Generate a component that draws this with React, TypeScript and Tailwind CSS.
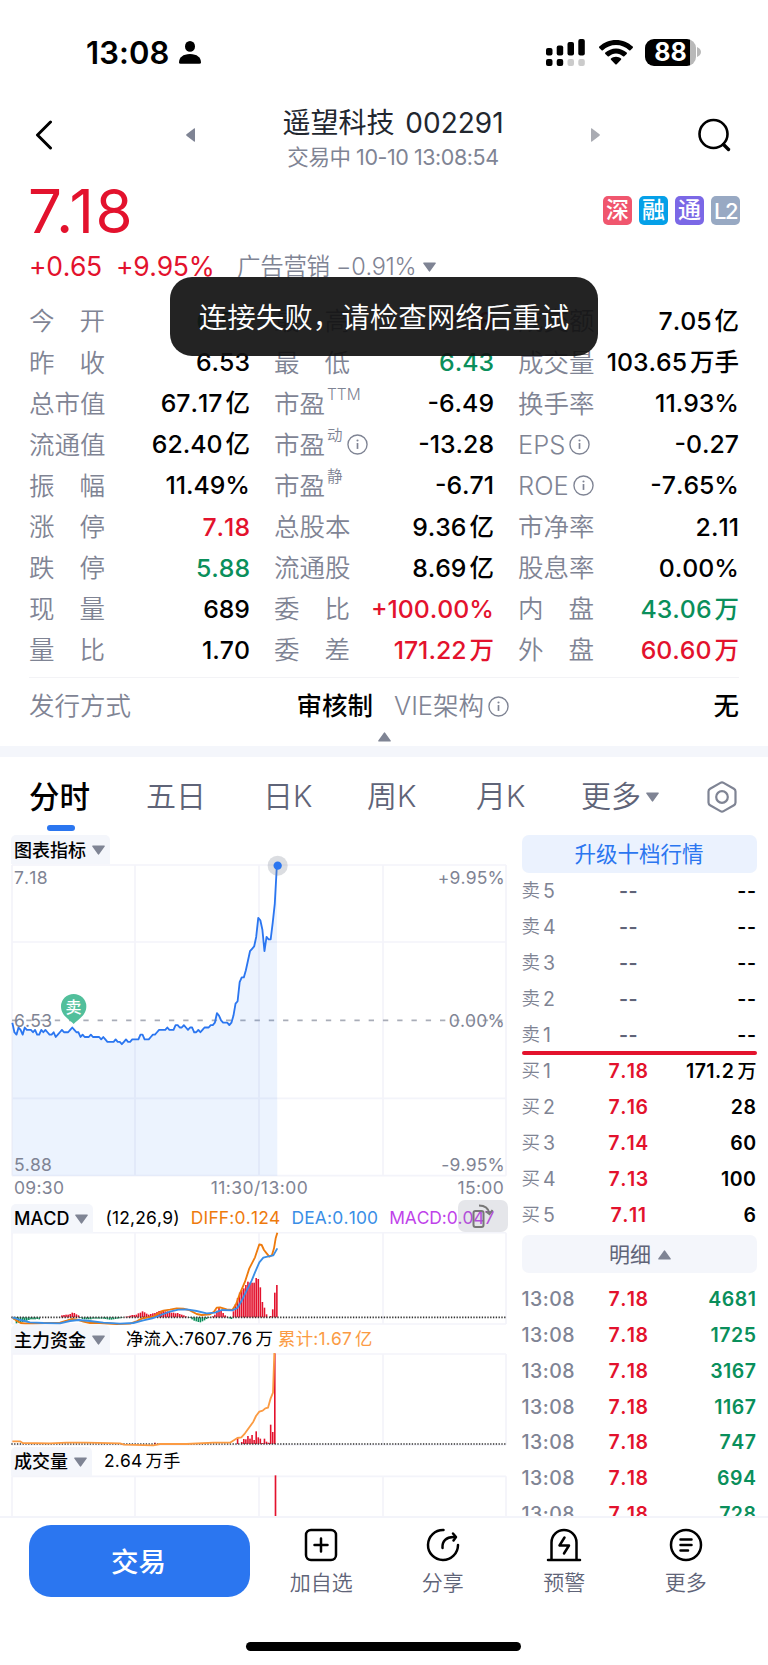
import { type ReactNode } from 'react'

type Tone = 'up' | 'down' | 'flat'

const TONE: Record<Tone, string> = {
  up: 'text-[#e3122d]',
  down: 'text-[#0a8f5b]',
  flat: 'text-black',
}

interface Quote {
  label: string
  sup?: string
  info?: boolean
  value: string
  unit?: string
  tone?: Tone
}

const QUOTES: Quote[] = [
  { label: '今开', value: '6.52', tone: 'down' },
  { label: '最高', value: '7.18', tone: 'up' },
  { label: '成交额', value: '7.05', unit: '亿' },
  { label: '昨收', value: '6.53' },
  { label: '最低', value: '6.43', tone: 'down' },
  { label: '成交量', value: '103.65', unit: '万手' },
  { label: '总市值', value: '67.17', unit: '亿' },
  { label: '市盈', sup: 'TTM', value: '-6.49' },
  { label: '换手率', value: '11.93%' },
  { label: '流通值', value: '62.40', unit: '亿' },
  { label: '市盈', sup: '动', info: true, value: '-13.28' },
  { label: 'EPS', info: true, value: '-0.27' },
  { label: '振幅', value: '11.49%' },
  { label: '市盈', sup: '静', value: '-6.71' },
  { label: 'ROE', info: true, value: '-7.65%' },
  { label: '涨停', value: '7.18', tone: 'up' },
  { label: '总股本', value: '9.36', unit: '亿' },
  { label: '市净率', value: '2.11' },
  { label: '跌停', value: '5.88', tone: 'down' },
  { label: '流通股', value: '8.69', unit: '亿' },
  { label: '股息率', value: '0.00%' },
  { label: '现量', value: '689' },
  { label: '委比', value: '+100.00%', tone: 'up' },
  { label: '内盘', value: '43.06', unit: '万', tone: 'down' },
  { label: '量比', value: '1.70' },
  { label: '委差', value: '171.22', unit: '万', tone: 'up' },
  { label: '外盘', value: '60.60', unit: '万', tone: 'up' },
]

const SELLS = ['5', '4', '3', '2', '1']
const BUYS = [
  { level: '1', price: '7.18', volume: '171.2', unit: '万' },
  { level: '2', price: '7.16', volume: '28' },
  { level: '3', price: '7.14', volume: '60' },
  { level: '4', price: '7.13', volume: '100' },
  { level: '5', price: '7.11', volume: '6' },
]
const TRADES = ['4681', '1725', '3167', '1167', '747', '694', '728']

/* ─── Chart data ─────────────────────────────────────────────────────────────
 * One entry per minute from 09:30. Charts use three units per CSS pixel, with
 * the first minute at x = 37 and MINUTE units between minutes.
 * ──────────────────────────────────────────────────────────────────────────── */
const MINUTE = 6.2
const minuteX = (i: number) => 37 + i * MINUTE

// Price minus previous close, in cents
const PRICES = [
  -1, -5, -6, -3, -4, -6, -3, -4, -4, -4, -5, -4, -6, -6, -4, -5, -4, -5, -6, -6, -5, -7, -6, -5, -4, -5,
  -5, -5, -4, -3, -4, -5, -5, -7, -6, -7, -7, -7, -6, -7, -7, -7, -7, -8, -7, -8, -9, -9, -9, -9, -8, -9,
  -9, -10, -9, -8, -9, -9, -8, -8, -8, -8, -6, -6, -8, -8, -8, -7, -6, -6, -5, -4, -4, -4, -4, -3, -4, -4,
  -4, -2, -2, -3, -3, -2, -3, -4, -3, -3, -5, -5, -4, -5, -4, -3, -3, -3, -2, -2, -1, 3, 2, 0, -1, -1, -1,
  -2, -1, 2, 7, 8, 16, 18, 18, 21, 25, 29, 30, 31, 35, 43, 42, 38, 29, 35, 34, 34, 41, 49, 65,
]
const PRICE_LINE = PRICES.map((p, i) => `${minuteX(i).toFixed(1)},${(511 - p * 7.15).toFixed(1)}`).join(' ')

const MACD_BARS = [
  0, -8, -18, -16, -16, -14, -12, -10, -8, -6, -6, -6, -5, -6, 0, 0, 0, 0, 0, 0, 0, 0, 0, 0, 6, 7, 8, 8, 10,
  14, 13, 9, 6, -2, -5, -6, -6, -6, -6, -4, -4, -4, -4, -4, -4, -5, -6, -7, -7, -6, -5, -4, -3, -2, 0, 2, 3,
  5, 7, 7, 8, 12, 14, 18, 15, 11, 8, 10, 12, 13, 16, 19, 20, 19, 18, 18, 16, 14, 14, 12, 13, 10, 8, 6, 3, 0,
  -2, -6, -10, -12, -14, -15, -12, -9, -5, -2, 0, 3, 8, 20, 28, 20, 13, 6, 2, -3, -5, 18, 40, 58, 74, 82, 87,
  97, 107, 104, 104, 104, 118, 115, 90, 46, 29, 9, 0, 4, 24, 74, 97,
]

const FUND_BARS = [
  [69, 4], [109, 18], [111, 6], [112, 15], [113, 14], [114, 24], [115, 16], [116, 27], [117, 12], [118, 38],
  [119, 20], [120, 16], [121, 3], [122, 16], [123, 7], [124, 4], [125, 58], [126, 36], [127, 272],
]

const DIFF_LINE =
  '37,382 50,392 62,399 75,400 100,400 140,399 180,398 200,392 215,387 232,389 250,395 270,399 300,399 350,402 390,401 410,394 425,386 440,383 460,380 475,370 490,362 510,359 530,355 550,356 570,361 590,372 605,375 630,373 642,365 650,353 660,352 680,358 697,360 708,343 720,310 735,275 748,235 765,202 778,163 785,165 792,180 800,190 808,200 816,195 822,175 827,145 832,128'
const DEA_LINE =
  '37,382 60,390 90,397 130,399 180,400 210,393 235,390 270,393 310,398 360,401 400,399 430,391 460,384 490,372 510,365 535,359 560,358 590,363 620,370 645,368 665,360 697,361 712,354 725,332 740,302 755,272 765,247 778,217 790,203 805,199 820,196 832,175'
const FUND_LINE =
  '37,754 60,754 68,759 150,760 200,758 260,758 360,760 372,764 460,766 480,762 560,762 640,758 690,758 712,744 724,742 735,730 748,712 760,695 768,678 778,665 788,662 796,655 804,653 812,625 819,608 823,489'

function Caret({ up, className = '' }: { up?: boolean; className?: string }) {
  return (
    <svg viewBox="0 0 13 10" className={`h-[10px] w-[13px] shrink-0 fill-[#7f8494] ${className}`}>
      <path d={up ? 'M5.7 .9a1 1 0 0 1 1.6 0L12.7 8.4a.7.7 0 0 1-.6 1.1H.9a.7.7 0 0 1-.6-1.1Z' : 'M5.7 9.1a1 1 0 0 0 1.6 0L12.7 1.6A.7.7 0 0 0 12.1 .5H.9a.7.7 0 0 0-.6 1.1Z'} />
    </svg>
  )
}

function InfoIcon() {
  return (
    <svg viewBox="0 0 20 20" className="ml-[4px] h-[21px] w-[21px] shrink-0" fill="none" stroke="#7f8494" strokeWidth="1.3">
      <circle cx="10" cy="10" r="9.1" />
      <path d="M10 8.6v5.6" strokeWidth="1.6" />
      <circle cx="10" cy="6.2" r="1" fill="#7f8494" stroke="none" />
    </svg>
  )
}

function StatusBar() {
  return (
    <div className="flex h-[95px] shrink-0 items-center justify-between pt-[9px] pr-[67px] pl-[86px]">
      <div className="flex items-center">
        <span className="text-[31px] leading-none font-semibold tracking-[0.1px]">13:08</span>
        <svg viewBox="0 0 22 23" className="ml-[9px] h-[23px] w-[22px]">
          <ellipse cx="11" cy="5.4" rx="5" ry="5.4" />
          <path d="M0 21.5C0 16.5 4 13 11 13s11 3.5 11 8.5c0 .8-.6 1.2-1.4 1.2H1.4C.6 22.7 0 22.3 0 21.5Z" />
        </svg>
      </div>
      <div className="flex items-center">
        <svg viewBox="0 0 39 27" className="h-[27px] w-[39px]">
          <rect x="0" y="9" width="6.5" height="7.5" rx="2" />
          <rect x="10.7" y="6.5" width="6.5" height="10" rx="2" />
          <rect x="21.5" y="3" width="6.5" height="13.5" rx="2" />
          <rect x="32.3" y="0" width="6.5" height="16.5" rx="2" />
          <rect x="0" y="20" width="6.5" height="7" rx="2" />
          <rect x="10.7" y="20" width="6.5" height="7" rx="2" />
          <rect x="21.5" y="20" width="6.5" height="7" rx="2" fill="#cbcbcb" />
          <rect x="32.3" y="20" width="6.5" height="7" rx="2" fill="#cbcbcb" />
        </svg>
        <svg viewBox="0 0 34 25" className="ml-[14px] h-[25px] w-[34px]">
          <path d="M17 0C23.500 0 29.400 2.500 33.700 6.600c.4.400.4.900 0 1.300l-2.300 2.300c-.4.400-.9.300-1.300 0C26.700 7 22.100 5 17 5S7.300 7 3.900 10.200c-.4.300-.9.400-1.300 0L.3 7.900c-.4-.4-.4-.9 0-1.300C4.600 2.500 10.500 0 17 0Z" />
          <path d="M17 8.400c4.100 0 7.900 1.600 10.700 4.200.4.400.4.900 0 1.300l-2.400 2.400c-.4.400-.9.300-1.300 0-1.900-1.700-4.300-2.800-7-2.800s-5.100 1.100-7 2.800c-.4.300-.9.400-1.300 0l-2.400-2.400c-.4-.4-.4-.9 0-1.300C9.100 10 12.900 8.400 17 8.400Z" />
          <path d="M17 16.700c2 0 3.700.7 5 1.900.4.400.4.800 0 1.200l-4.300 4.400c-.4.400-1 .4-1.400 0L12 19.800c-.4-.4-.4-.8 0-1.200 1.300-1.200 3-1.900 5-1.900Z" />
        </svg>
        <div className="ml-[12px] flex h-[27px] w-[51px] items-center justify-center rounded-[9px] bg-[linear-gradient(90deg,#000_0_89%,#b9b9b9_89%)]">
          <span className="text-[25px] leading-none font-bold text-white">88</span>
        </div>
        <svg viewBox="0 0 4 10" className="ml-[1px] h-[10px] w-[4px]" fill="#b9b9b9">
          <path d="M0 0c2.500 1 4 2.700 4 5s-1.500 4-4 5Z" />
        </svg>
      </div>
    </div>
  )
}

function Header() {
  return (
    <div className="flex h-[80px] shrink-0 items-center justify-between pr-[37px] pl-[35px]">
      <div className="flex items-center">
        <svg viewBox="0 0 18 30" className="h-[30px] w-[18px]" fill="none" stroke="#000" strokeWidth="3" strokeLinecap="round" strokeLinejoin="round">
          <path d="M15.500 2 2.500 15l13 13" />
        </svg>
        <svg viewBox="0 0 9 14" className="ml-[133px] h-[14px] w-[9px] fill-[#7f8494]">
          <path d="M9 .8v12.400a.6.6 0 0 1-1 .4L.5 7.700a1 1 0 0 1 0-1.400L8 .4a.6.6 0 0 1 1 .4Z" />
        </svg>
      </div>
      <div className="pt-[9px] text-center whitespace-nowrap">
        <div className="h-[34px] text-[28px] leading-[34px] text-[#22272f] [word-spacing:3px]">遥望科技 002291</div>
        <div className="h-[34px] text-[21.500px] leading-[34px] tracking-[-0.450px] text-[#7f8494]">交易中 10-10 13:08:54</div>
      </div>
      <div className="flex items-center">
        <svg viewBox="0 0 9 14" className="mr-[97px] h-[14px] w-[9px] fill-[#a9abb2]">
          <path d="M0 .8v12.400a.6.6 0 0 0 1 .4l7.500-5.900a1 1 0 0 0 0-1.400L1 .4a.6.6 0 0 0-1 .4Z" />
        </svg>
        <svg viewBox="0 0 34 34" className="h-[34px] w-[34px]" fill="none" stroke="#000" strokeWidth="2.600" strokeLinecap="round">
          <circle cx="16.500" cy="16" r="14" />
          <path d="m26.500 26.500 5 5" strokeWidth="3.400" />
        </svg>
      </div>
    </div>
  )
}

function Badge({ className, children }: { className: string; children: ReactNode }) {
  return (
    <span className={`flex h-[29px] w-[29px] items-center justify-center rounded-[5px] leading-none font-medium text-white ${className}`}>
      {children}
    </span>
  )
}

function QuoteCell({ label, sup, info, value, unit, tone = 'flat' }: Quote) {
  const spread = label.length === 2 && !sup
  return (
    <div className="flex items-center justify-between whitespace-nowrap">
      <div className="flex items-center text-[25.500px] font-[350] text-[#7f8494]">
        {spread ? (
          <span className="flex w-[76px] justify-between">
            <span>{label[0]}</span>
            <span>{label[1]}</span>
          </span>
        ) : (
          <span>{label}</span>
        )}
        {sup && <sup className="top-0 -mt-[18px] ml-[2px] text-[15.500px] leading-none">{sup}</sup>}
        {info && <InfoIcon />}
      </div>
      <div className={`text-[24.800px] font-medium ${TONE[tone]}`}>
        {value}
        {unit && <span className="ml-[3px] text-[24.500px]">{unit}</span>}
      </div>
    </div>
  )
}

function QuotePanel() {
  return (
    <div className="shrink-0 pr-[29px] pl-[29px]">
      <div className="flex h-[71px] items-center justify-between">
        <div className="-ml-[1px] text-[60px] leading-none tracking-[1.500px] text-[#e3122d] [font-kerning:normal]">7.18</div>
        <div className="-mr-[1px] flex gap-[7px]">
          <Badge className="bg-[#f0566e] text-[23px]">深</Badge>
          <Badge className="bg-[#05a0e8] text-[23px]">融</Badge>
          <Badge className="bg-[#7b68e6] text-[23px]">通</Badge>
          <Badge className="bg-[#98a9c3] text-[22px] tracking-[-1.500px]">L2</Badge>
        </div>
      </div>
      <div className="mt-[1px] flex h-[40px] items-center text-[26.500px] tracking-[-0.300px] text-[#e3122d]">
        <span className="w-[87px]">+0.65</span>
        <span className="w-[121px]">+9.95%</span>
        <span className="text-[23.500px] font-[350] text-[#7f8494]">广告营销 −0.91%</span>
        <Caret className="ml-[7px]" />
      </div>
      <div className="mt-[14px] grid h-[370px] grid-cols-[221px_220px_221px] grid-rows-9 gap-x-[24px]">
        {QUOTES.map((q, i) => (
          <QuoteCell key={i} {...q} />
        ))}
      </div>
      <div className="mt-[6px] flex h-[57px] items-center border-t border-[#f3f3f6] pt-[1px] text-[25.500px]">
        <span className="font-[350] text-[#7f8494]">发行方式</span>
        <span className="ml-auto font-medium">审核制</span>
        <span className="ml-[21px] flex w-[345px] items-center font-[350] text-[#7f8494]">
          VIE架构
          <InfoIcon />
          <span className="ml-auto font-medium text-black">无</span>
        </span>
      </div>
      <div className="flex h-[12px] justify-center">
        <Caret up className="-mt-[2px]" />
      </div>
    </div>
  )
}

function Tabs() {
  return (
    <div className="flex h-[78px] shrink-0 items-center pt-[1px] text-[30px] font-[350] text-[#5f6478]">
      <div className="relative ml-[29px] flex h-full w-[117px] items-center text-[30.500px] font-medium text-black">
        分时
        <span className="absolute bottom-[4px] left-[18px] h-[6px] w-[28px] rounded-full bg-[#2b76f0]" />
      </div>
      <span className="w-[117px]">五日</span>
      <span className="w-[104px]">日K</span>
      <span className="w-[109px]">周K</span>
      <span className="w-[105px]">月K</span>
      <span className="flex w-[126px] items-center">
        更多
        <Caret className="ml-[5px]" />
      </span>
      <svg viewBox="0 0 30 32" className="h-[32px] w-[30px]" fill="none" stroke="#7f8494" strokeWidth="2.200" strokeLinejoin="round">
        <path d="M13.400 1.900a3.200 3.200 0 0 1 3.200 0l10.300 5.900a3.200 3.200 0 0 1 1.600 2.800v10.800a3.200 3.200 0 0 1-1.600 2.800l-10.300 5.900a3.200 3.200 0 0 1-3.200 0L3.100 24.200a3.200 3.200 0 0 1-1.600-2.800V10.600a3.200 3.200 0 0 1 1.600-2.800Z" />
        <circle cx="15" cy="16" r="5.800" />
      </svg>
    </div>
  )
}

function Pill({ children }: { children: ReactNode }) {
  return (
    <span className="flex h-[29px] shrink-0 items-center gap-[6px] rounded-t-[5px] bg-[#f4f6fb] pt-[1px] pr-[5px] pl-[3px] text-[18px] font-medium tracking-normal">
      {children}
      <Caret />
    </span>
  )
}

function Grid({ top, bottom }: { top: number; bottom: number }) {
  return (
    <g stroke="#f3f4fa" strokeWidth="5">
      <path d={`M36 ${top}H1518M36 ${bottom}H1518`} />
      <path d={`M36 ${top}V${bottom}M405 ${top}V${bottom}M777 ${top}V${bottom}M1149 ${top}V${bottom}M1518 ${top}V${bottom}`} />
    </g>
  )
}

function PriceChart() {
  return (
    <div className="relative h-[312px]">
      <svg viewBox="33 42 1491 936" className="h-[312px] w-[497px] overflow-visible">
        <Grid top={45} bottom={977} />
        <path d="M36 276H1518M36 745H1518" stroke="#f3f4fa" strokeWidth="5" />
        <path d="M36 511H1518" stroke="#a9adb8" strokeWidth="5" strokeDasharray="16 26.800" />
        <polygon points={`37,977 ${PRICE_LINE} 832,977`} fill="#2b76f0" fillOpacity="0.090" />
        <polyline points={PRICE_LINE} fill="none" stroke="#2b76f0" strokeWidth="5.500" strokeLinejoin="round" />
        <circle cx="833" cy="47" r="30" fill="#7f8494" fillOpacity="0.280" />
        <circle cx="833" cy="47" r="12.500" fill="#2b76f0" />
        <path d="M221 522c-10-12-38-24-38-53a38 37 0 0 1 76 0c0 29-28 41-38 53Z" fill="#52bf9b" />
      </svg>
      <span className="absolute top-[133px] left-[54.500px] text-[16px] leading-[20px] font-medium text-white">卖</span>
      <div className="absolute inset-0 flex flex-col justify-between px-[3px] pt-[3px] text-[17.500px] leading-[22px] tracking-[0.200px] text-[#7f8494]">
        <div className="flex justify-between">
          <span>7.18</span>
          <span>+9.95%</span>
        </div>
        <div className="-mt-[1px] flex justify-between">
          <span>6.53</span>
          <span>0.00%</span>
        </div>
        <div className="flex justify-between">
          <span>5.88</span>
          <span>-9.95%</span>
        </div>
      </div>
    </div>
  )
}

function Bars({ bars, base }: { bars: number[][]; base: number }) {
  return (
    <>
      {bars.map(([i, h]) => (
        <rect
          key={i}
          x={minuteX(i) - 2.4}
          y={h > 0 ? base - h : base}
          width="4.800"
          height={Math.abs(h)}
          fill={h > 0 ? '#e3122d' : '#0a8f5b'}
        />
      ))}
    </>
  )
}

function ChartColumn() {
  return (
    <div className="w-[497px] shrink-0 text-[17.400px] tracking-[0.200px]">
      <div className="flex h-[29px]">
        <Pill>图表指标</Pill>
      </div>
      <PriceChart />
      <div className="flex h-[27px] items-center justify-between pr-[4px] pb-[2px] pl-[3px] text-[17.500px] tracking-[0.300px] text-[#7f8494]">
        <span>09:30</span>
        <span className="-ml-[3px] tracking-[0.450px]">11:30/13:00</span>
        <span>15:00</span>
      </div>
      <div className="relative flex h-[29px] items-center pt-[1px] whitespace-nowrap">
        <Pill>MACD</Pill>
        <span className="ml-[12px]">(12,26,9)</span>
        <span className="ml-[11px] text-[#ee7a0c]">DIFF:0.124</span>
        <span className="ml-[11px] text-[#3a8ee6]">DEA:0.100</span>
        <span className="ml-[11px] tracking-[-0.100px] text-[#bf43ea]">MACD:0.047</span>
        <span className="absolute -top-[3px] right-0 flex h-[32px] w-[50px] items-center justify-center rounded-[7px] bg-[#7f8494]/20">
          <svg viewBox="0 0 22 26" className="h-[26px] w-[22px]" fill="none" stroke="#777" strokeWidth="2">
            <rect x="1.500" y="8" width="10" height="16" rx="2" />
            <path d="M7 2.500c6 0 9.500 3 10.500 8" />
            <path d="M14 8.500 17.500 11l3-4" />
          </svg>
        </span>
      </div>
      <svg viewBox="33 126 1491 279" className="h-[93px] w-[497px]">
        <Grid top={128} bottom={402} />
        <Bars bars={MACD_BARS.map((h, i) => [i, h]).filter(([, h]) => h !== 0)} base={382} />
        <path d="M34 382H1518" stroke="#333" strokeWidth="5" strokeDasharray="4 4.400" />
        <polyline points={DIFF_LINE} fill="none" stroke="#ee7a0c" strokeWidth="5.500" strokeLinejoin="round" />
        <polyline points={DEA_LINE} fill="none" stroke="#3a8ee6" strokeWidth="5.500" strokeLinejoin="round" />
      </svg>
      <div className="flex h-[28px] items-center pt-[1px] whitespace-nowrap">
        <Pill>主力资金</Pill>
        <span className="ml-[16px]">净流入:7607.76</span>
        <span className="ml-[3px]">万</span>
        <span className="ml-[5px] text-[#fb9b43]">累计:1.67</span>
        <span className="ml-[3px] text-[#fb9b43]">亿</span>
      </div>
      <svg viewBox="33 489 1491 282" className="h-[94px] w-[497px]">
        <Grid top={492} bottom={765} />
        <Bars bars={FUND_BARS} base={762} />
        <path d="M34 762H1518" stroke="#333" strokeWidth="5" strokeDasharray="4 4.400" />
        <polyline points={FUND_LINE} fill="none" stroke="#fb9b43" strokeWidth="5.500" strokeLinejoin="round" />
      </svg>
      <div className="flex h-[28px] items-center whitespace-nowrap">
        <Pill>成交量</Pill>
        <span className="ml-[12px]">2.64</span>
        <span className="ml-[3px]">万手</span>
      </div>
      <svg viewBox="33 853 1491 126" className="h-[42px] w-[497px]">
        <Grid top={857} bottom={1100} />
        <path d="M826.500 854V979" stroke="#e3122d" strokeWidth="5" />
      </svg>
    </div>
  )
}

function BookRow({ label, price, priceClass, children }: { label: ReactNode; price: string; priceClass: string; children: ReactNode }) {
  return (
    <div className="grid h-[36px] grid-cols-[70px_74px_1fr] items-center text-[19.500px] tracking-[0.500px]">
      <span className="text-[#7f8494]">{label}</span>
      <span className={`text-center ${priceClass}`}>{price}</span>
      <span className="text-right font-semibold">{children}</span>
    </div>
  )
}

function Level({ side, level }: { side: string; level: string }) {
  return (
    <span className="flex items-center gap-[3px] tracking-normal">
      <span className="-mt-[2px] text-[18.500px] font-[350]">{side}</span>
      <span>{level}</span>
    </span>
  )
}

function OrderBook() {
  return (
    <div className="ml-[13.500px] w-[235px]">
      <div className="flex h-[38px] items-center justify-center rounded-[7px] bg-[#ebf2fe] text-[21.500px] text-[#2b76f0]">升级十档行情</div>
      <div className="h-[180px] pt-[1px]">
        {SELLS.map((level) => (
          <BookRow key={level} label={<Level side="卖" level={level} />} price="--" priceClass="font-semibold text-[#5f6478]">
            --
          </BookRow>
        ))}
      </div>
      <div className="-mt-[2px] h-[4px] rounded-full bg-[#e3122d]" />
      <div className="-mt-[1px] h-[181px]">
        {BUYS.map(({ level, price, volume, unit }) => (
          <BookRow key={level} label={<Level side="买" level={level} />} price={price} priceClass="font-semibold text-[#e3122d]">
            {volume}
            {unit && <span className="ml-[3px] text-[19px] font-medium tracking-normal">{unit}</span>}
          </BookRow>
        ))}
      </div>
      <div className="flex h-[38px] items-center justify-center rounded-[7px] bg-[#f4f6fb] pt-[1px] pl-[2px] text-[21px] text-[#5f6478]">
        明细
        <Caret up className="ml-[7px]" />
      </div>
      <div className="mt-[9px]">
        {TRADES.map((volume) => (
          <div key={volume} className="-mb-[0.250px]">
            <BookRow label={<span className="font-medium">13:08</span>} price="7.18" priceClass="font-semibold text-[#e3122d]">
              <span className="text-[#0a8f5b]">{volume}</span>
            </BookRow>
          </div>
        ))}
      </div>
    </div>
  )
}

function NavItem({ label, children }: { label: string; children: ReactNode }) {
  return (
    <div className="flex w-[121.500px] flex-col items-center text-[21px] font-[350] text-[#5f6478]">
      <svg viewBox="0 0 36 34" className="h-[34px] w-[36px]" fill="none" stroke="#000" strokeWidth="2.500" strokeLinecap="round" strokeLinejoin="round">
        {children}
      </svg>
      <span className="mt-[6px] leading-[30px]">{label}</span>
    </div>
  )
}

function BottomBar() {
  return (
    <div className="flex h-[149px] shrink-0 flex-col border-t-2 border-[#f3f4fa] bg-white">
      <div className="flex">
        <div className="mt-[7px] ml-[29px] flex h-[72px] w-[221px] items-center justify-center rounded-[22px] bg-[#2b76f0] pt-[3px] pr-[2px] text-[27.500px] font-medium text-white">交易</div>
        <div className="mt-[10px] ml-[10.500px] flex">
          <NavItem label="加自选">
            <rect x="3" y="2" width="30" height="30" rx="5" />
            <path d="M18 10.500v13M11.500 17h13" />
          </NavItem>
          <NavItem label="分享">
            <path d="M18.500 2A15 15 0 1 0 33 17" />
            <path d="M17.500 20c-.5-6.500 3.500-11.500 12-11" />
            <path d="m28 5.500 3 3.500-2.500 3.500" />
          </NavItem>
          <NavItem label="预警">
            <path d="M2 32h32M5.500 32V14.500a12.500 12.500 0 0 1 25 0V32" />
            <path d="m18.500 9.500-5 8h9.500l-5 8" />
          </NavItem>
          <NavItem label="更多">
            <circle cx="18" cy="17" r="15" />
            <path d="M12.500 11.500h11M12.500 17h11M12.500 22.500h7.500" />
          </NavItem>
        </div>
      </div>
      <div className="mt-auto mb-[14.500px] ml-[246px] h-[9px] w-[275px] rounded-full bg-black" />
    </div>
  )
}

export default function App() {
  return (
    <div className="relative flex h-[1665px] w-[768px] flex-col overflow-hidden bg-white font-['Inter','Noto_Sans_CJK_SC',sans-serif] text-black [font-kerning:none]">
      <StatusBar />
      <Header />
      <QuotePanel />
      <div className="h-[11px] shrink-0 bg-[#f4f6fb]" />
      <Tabs />
      <div className="flex h-[681px] shrink-0 overflow-hidden pl-[11px]">
        <ChartColumn />
        <OrderBook />
      </div>
      <BottomBar />
      <div className="absolute top-[277px] left-[170px] flex h-[79px] w-[428px] items-center justify-center rounded-[22px] bg-[#101010]/92 pt-[4px] text-[28.500px] font-[350] text-white">
        连接失败，请检查网络后重试
      </div>
    </div>
  )
}
